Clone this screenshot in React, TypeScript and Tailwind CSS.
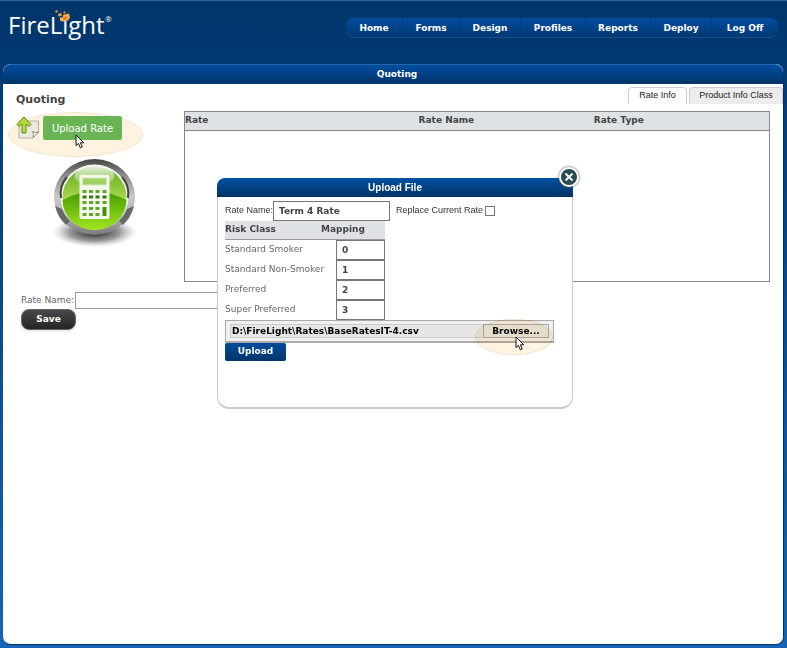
import React from "react";

const NAV = [
  { label: "Home", width: "w-[57px]" },
  { label: "Forms", width: "w-[57px]" },
  { label: "Design", width: "w-[61px]" },
  { label: "Profiles", width: "w-[65px]" },
  { label: "Reports", width: "w-[65px]" },
  { label: "Deploy", width: "w-[61px]" },
  { label: "Log Off", width: "w-[66px]" },
];

const RISKS = [
  { name: "Standard Smoker", value: "0" },
  { name: "Standard Non-Smoker", value: "1" },
  { name: "Preferred", value: "2" },
  { name: "Super Preferred", value: "3" },
];

function Cursor({ className }: { className: string }) {
  return (
    <svg className={`pointer-events-none absolute ${className}`} width="10" height="15" viewBox="0 0 10 15" aria-hidden="true">
      <path d="M1 1v10.6l2.4-2.2 1.9 4.4 2-.9-1.9-4.1h3.4z" fill="#fff" stroke="#111" strokeWidth="1" strokeLinejoin="round" />
    </svg>
  );
}

function Logo() {
  return (
    <div className="relative h-11 w-[110px] font-['Open_Sans','Noto_Sans',sans-serif] text-white">
      <span className="text-[24px] leading-[48px]">FireLight</span>
      <span className="absolute top-3 left-[97px] text-[8px] leading-3">®</span>
      <svg className="absolute top-2 left-[46px]" width="18" height="14" viewBox="0 0 18 14" aria-hidden="true">
        <path d="M1 2l2-1 1 2-2 1z" fill="#d99040" />
        <path d="M4 5l3-1 1 2.500-3.500 1z" fill="#f0a23c" />
        <path d="M9 3l2-1 1 2-2 1z" fill="#c48340" />
        <path d="M9 6l6-1.500 1 4-2 3-6 1-2-1v-3l3-.5z" fill="#fbb04c" />
        <path d="M9 8l4-.5-.5 3-3 .5z" fill="#e87a26" />
      </svg>
    </div>
  );
}

function UploadIcon() {
  return (
    <svg className="relative" width="24" height="24" viewBox="0 0 24 24" aria-hidden="true">
      <path d="M3 5h19.500v11l-5.500 6H3z" fill="#ece9e3" stroke="#b5b0a4" />
      <path d="M22.500 16q-3 1.500-6-.5 2 3 .5 6.500z" fill="#fff" stroke="#8f8b82" />
      <path d="M8 1L1 8.500l2 2 3-2.500V17h4V8l3 2.500 2-2z" fill="#b4d93a" stroke="#698e14" strokeLinejoin="round" />
    </svg>
  );
}

function CalculatorBadge() {
  return (
    <svg width="88" height="94" viewBox="0 0 88 94" aria-hidden="true">
      <defs>
        <linearGradient id="ring" x1="0" y1="0" x2="0" y2="1">
          <stop offset="0" stopColor="#444" />
          <stop offset=".2" stopColor="#888" />
          <stop offset=".5" stopColor="#c9c9cb" />
          <stop offset=".8" stopColor="#aaa" />
          <stop offset="1" stopColor="#777" />
        </linearGradient>
        <linearGradient id="greenTop" x1="0" y1="0" x2="0" y2="1">
          <stop offset="0" stopColor="#62a51c" />
          <stop offset=".55" stopColor="#a9dc50" />
          <stop offset="1" stopColor="#b2e25c" />
        </linearGradient>
        <linearGradient id="greenBottom" x1="0" y1="0" x2="0" y2="1">
          <stop offset="0" stopColor="#469a00" />
          <stop offset="1" stopColor="#a0e620" />
        </linearGradient>
        <linearGradient id="shine" x1="0" y1="0" x2="0" y2="1">
          <stop offset="0" stopColor="#fff" stopOpacity=".85" />
          <stop offset="1" stopColor="#fff" stopOpacity=".1" />
        </linearGradient>
        <radialGradient id="shade">
          <stop offset="0" stopColor="#111" />
          <stop offset=".6" stopColor="#555" stopOpacity=".6" />
          <stop offset="1" stopColor="#999" stopOpacity="0" />
        </radialGradient>
      </defs>
      <ellipse cx="43.500" cy="76" rx="42" ry="15" fill="url(#shade)" />
      <ellipse cx="43.500" cy="41" rx="40.500" ry="38" fill="url(#ring)" />
      <path d="M4 50l7 3q3 8 8 12l-4 4Q7 62 4 50zM83 50l-7 3q-3 8-8 12l4 4q8-7 11-19z" fill="#555" opacity=".8" />
      <ellipse cx="43.500" cy="41" rx="34" ry="32.500" fill="#f3f7ec" />
      <path d="M16 21q-8 9-6 21M71 21q8 9 6 21" fill="none" stroke="#444" strokeWidth="2" />
      <ellipse cx="43.500" cy="41" rx="32" ry="30.500" fill="url(#greenTop)" />
      <path d="M11.500 44q32-17 64 0a32 30 0 0 1-64 0z" fill="url(#greenBottom)" />
      <ellipse cx="43.500" cy="20" rx="20" ry="10" fill="url(#shine)" />
      <g transform="translate(0.500 2)">
        <path d="M30 17h26q2 0 2 2v40q0 2-2 2H30q-2 0-2-2V19q0-2 2-2z" fill="#f4faeb" />
        <path d="M31 20h24v7H31z" fill="#a0d066" stroke="#d4ebbb" />
        <path
          d="M31 32h4v3h-4zM37.500 32h4v3h-4zM44 32h4v3h-4zM51 32h4v3h-4zM31 43h4v3h-4zM37.500 43h4v3h-4zM44 43h4v3h-4zM51 43h4v3h-4zM31 49h4v3h-4zM37.500 49h4v3h-4zM44 49h4v3h-4zM31 55h4v3h-4zM37.500 55h4v3h-4zM44 55h4v3h-4z"
          fill="#63a529"
        />
        <path d="M31 37.500h4v3h-4zM37.500 37.500h4v3h-4zM44 37.500h4v3h-4zM51 37.500h4v3h-4z" fill="#357710" />
        <path d="M51 49h4v9h-4z" fill="#458e13" />
      </g>
    </svg>
  );
}

export default function App() {
  return (
    <div className="flex min-h-screen flex-col border-t border-[#28659d] bg-linear-to-b from-[#01356b] to-[#1763b3] px-[3px] pb-[3px] font-['DejaVu_Sans',Verdana,sans-serif] text-[9px] text-[#444]">
      <header className="flex h-[63px] items-start justify-between pr-[6px] pl-[5px]">
        <Logo />
        <nav className="mt-[17px] flex h-5 overflow-hidden rounded-lg border-b border-[#14508e] bg-linear-to-b from-[#034da0] to-[#013972]">
          {NAV.map((item) => (
            <a
              key={item.label}
              href="#"
              className={`${item.width} border-r border-[#023b78] text-center leading-5 font-bold text-white last:border-r-0`}
            >
              {item.label}
            </a>
          ))}
        </nav>
      </header>

      <main className="relative flex flex-1 flex-col rounded-lg border-r border-b border-[#043263] bg-white">
        <h1 className="h-5 rounded-t-lg border-t border-[#2467ac] bg-linear-to-b from-[#034da0] to-[#013468] pl-2 text-center leading-[19px] font-bold text-white">
          Quoting
        </h1>

        <div className="flex">
          <section className="w-[181px] shrink-0 pl-[13px]">
            <h2 className="mt-2 text-[11px] leading-4 font-bold">Quoting</h2>
            <div className="relative mt-2 flex items-center gap-[3px]">
              <div className="absolute -top-1 -left-2 h-[45px] w-[135px] rounded-[50%] border border-[#f0e5d2] bg-[#fff3e0]" />
              <UploadIcon />
              <button className="relative h-6 w-[79px] rounded-xs bg-[#6ab553] text-[10px] text-white">Upload Rate</button>
              <Cursor className="top-[18px] left-[59px]" />
            </div>
            <div className="mt-4 ml-[35px]">
              <CalculatorBadge />
            </div>
          </section>

          <section className="min-w-0 flex-1">
            <div role="tablist" className="mt-[3px] flex h-[17px] justify-end gap-0.5 font-['Liberation_Sans',Arial,sans-serif] text-[#222]">
              <button role="tab" aria-selected="true" className="w-[59px] rounded-t-sm border border-b-0 border-[#ccc] bg-white">
                Rate Info
              </button>
              <button role="tab" aria-selected="false" className="w-[94px] rounded-t-sm border border-b-0 border-[#ccc] bg-[#ececec]">
                Product Info Class
              </button>
            </div>
            <div className="mt-[7px] mr-[13px] h-[171px] border border-[#888]">
              <table className="w-full table-fixed text-left">
                <thead>
                  <tr className="h-[18px] border-b border-[#888] bg-[#dee2e5]">
                    <th className="w-[40%] p-0 font-bold">Rate</th>
                    <th className="w-[30%] p-0 font-bold">Rate Name</th>
                    <th className="w-[30%] p-0 font-bold">Rate Type</th>
                  </tr>
                </thead>
              </table>
            </div>
          </section>
        </div>

        <form className="mt-[10px] pl-[18px]" onSubmit={(e) => e.preventDefault()}>
          <div className="flex items-center">
            <label htmlFor="rate" className="w-[54px] whitespace-nowrap text-[#666]">
              Rate Name:
            </label>
            <input id="rate" className="h-[17px] w-[200px] border border-[#999] bg-white px-1" />
          </div>
          <button className="h-[21px] w-[55px] rounded-lg border border-[#666] bg-linear-to-b from-[#4a4a4a] to-[#252525] font-bold text-white shadow-sm">
            Save
          </button>
        </form>

        <div
          role="dialog"
          aria-label="Upload File"
          className="absolute top-[114px] left-1/2 ml-0.5 h-[231px] w-[356px] -translate-x-1/2 rounded-xl border border-b-2 border-[#ccc] bg-white"
        >
          <h2 className="-mx-px -mt-px h-[19px] rounded-tl-lg border-b border-[#023161] bg-linear-to-b from-[#034fa3] to-[#013669] text-center font-['Liberation_Sans',Arial,sans-serif] text-[10px] leading-[19px] font-bold text-white">
            Upload File
          </h2>
          <button aria-label="Close" className="absolute -top-3 -right-[7px] size-5 rounded-full border-2 border-white bg-[#254b52] shadow-[0_0_3px_#555]">
            <svg className="size-4" viewBox="0 0 16 16" aria-hidden="true">
              <path d="M4.500 4.500l7 7m0-7l-7 7" stroke="#fff" strokeWidth="2" />
            </svg>
          </button>

          <div className="px-[7px] pt-1">
            <div className="flex items-center font-['Liberation_Sans',Arial,sans-serif] text-[#333]">
              <label htmlFor="name" className="w-12 whitespace-nowrap">
                Rate Name:
              </label>
              <input
                id="name"
                defaultValue="Term 4 Rate"
                className="h-5 w-[117px] border border-[#777] px-[5px] font-['DejaVu_Sans',Verdana,sans-serif] font-bold text-[#444]"
              />
              <label htmlFor="replace" className="mr-0.5 ml-[6px]">
                Replace Current Rate
              </label>
              <input id="replace" type="checkbox" className="size-[10px] appearance-none border border-[#777] bg-white" />
            </div>
            <table className="w-40 table-fixed">
              <thead>
                <tr className="h-[18px] border-b border-[#999] bg-[#dee2e5] text-left">
                  <th className="w-24 p-0 font-bold">Risk Class</th>
                  <th className="w-[15px] p-0 font-bold whitespace-nowrap">Mapping</th>
                  <th className="w-[49px] p-0" />
                </tr>
              </thead>
              <tbody>
                {RISKS.map((risk) => (
                  <tr key={risk.name}>
                    <td colSpan={2} className="p-0 text-[#666]">
                      <label htmlFor={`risk-${risk.value}`}>{risk.name}</label>
                    </td>
                    <td className="p-0">
                      <input
                        id={`risk-${risk.value}`}
                        defaultValue={risk.value}
                        className="block h-5 w-[49px] border border-[#777] px-[5px] font-bold"
                      />
                    </td>
                  </tr>
                ))}
              </tbody>
            </table>
            <div className="relative flex h-[23px] w-[329px] items-center border border-b-2 border-[#aaa] bg-[#f0f0f0] px-1 font-bold text-black">
              <input aria-label="File" readOnly defaultValue="D:\FireLight\Rates\BaseRatesIT-4.csv" className="h-[14px] min-w-0 flex-1 border border-r-0 border-[#ccc] bg-[#e6e6e6] px-px" />
              <button className="h-[14px] w-[66px] border border-[#aaa] bg-[#e6e6e6] leading-3">Browse...</button>
              <div className="pointer-events-none absolute -top-0.5 right-0 h-9 w-[78px] rounded-[50%] border border-[#f0e5d2] bg-[#fff4e2] mix-blend-multiply" />
              <Cursor className="top-[15px] right-[28px]" />
            </div>
            <button className="block h-[18px] w-[61px] rounded-xs bg-linear-to-b from-[#034b9b] to-[#013669] font-bold text-white">Upload</button>
          </div>
        </div>
      </main>
    </div>
  );
}
